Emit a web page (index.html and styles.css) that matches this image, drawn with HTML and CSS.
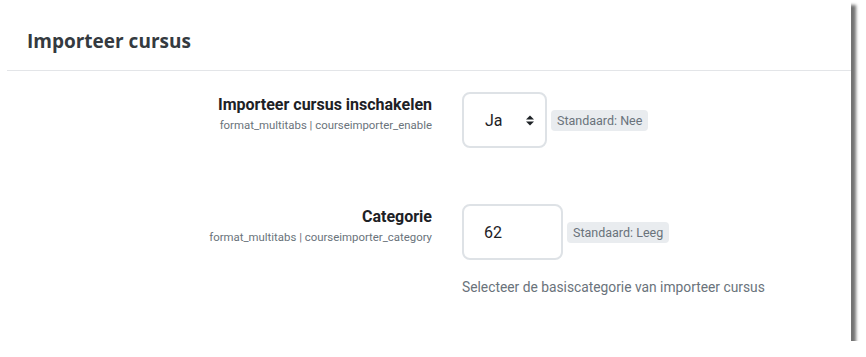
FILE: index.html
```html
<!DOCTYPE html>
<html lang="nl">
<head>
<meta charset="utf-8">
<title>Importeer cursus</title>
<link rel="stylesheet" href="styles.css">
</head>
<body>
<div class="page">
  <div class="header">
    <h2 class="title">Importeer cursus</h2>
  </div>
  <div class="settings">
    <div class="label-col">
      <div class="label">Importeer cursus inschakelen</div>
      <div class="setting-name">format_multitabs | courseimporter_enable</div>
    </div>
    <div class="control-col">
      <div class="control-line">
        <div class="select">
          <span>Ja</span>
          <svg class="caret" width="8" height="11" viewBox="0 0 8 11"><path d="M0 4.5 L4 0.5 L8 4.5 Z M0 6.5 L8 6.5 L4 10.5 Z" fill="#1d2125"/></svg>
        </div>
        <span class="badge">Standaard: Nee</span>
      </div>
    </div>

    <div class="label-col row2">
      <div class="label">Categorie</div>
      <div class="setting-name">format_multitabs | courseimporter_category</div>
    </div>
    <div class="control-col row2">
      <div class="control-line">
        <div class="input">62</div>
        <span class="badge">Standaard: Leeg</span>
      </div>
      <div class="help">Selecteer de basiscategorie van importeer cursus</div>
    </div>
  </div>
</div>
</body>
</html>
```

FILE: styles.css
```css
html, body {
  margin: 0;
  padding: 0;
  background: #ffffff;
}

body {
  font-family: Roboto, "Liberation Sans", sans-serif;
  color: #1d2125;
}

.page {
  width: 851px;
  height: 341px;
  background: #ffffff;
  box-shadow: 5px 5px 3px rgba(0, 0, 0, 0.55);
  position: relative;
}

.header {
  margin-left: 7px;
  border-bottom: 1px solid #e3e5e8;
  height: 71px;
  box-sizing: border-box;
  padding: 28px 0 0 20px;
}

.title {
  margin: 0;
  font-family: "Open Sans", sans-serif;
  font-weight: 700;
  font-size: 19px;
  line-height: 26px;
  color: #343a40;
}

.settings {
  display: grid;
  grid-template-columns: 432px 1fr;
  column-gap: 30px;
  row-gap: 56px;
  padding-top: 21px;
}

.label-col {
  text-align: right;
  padding-top: 1px;
}

.label {
  font-weight: 700;
  font-size: 16px;
  line-height: 24px;
  color: #1d2125;
}

.setting-name {
  font-size: 11.4px;
  line-height: 16px;
  color: #6a737b;
}

.control-line {
  display: flex;
  align-items: center;
  gap: 4px;
}

.select, .input {
  box-sizing: border-box;
  height: 56px;
  border: 2px solid #dee2e6;
  border-radius: 8px;
  font-size: 16px;
  color: #1d2125;
  display: flex;
  align-items: center;
}

.select {
  width: 85px;
  padding: 0 11px 0 21px;
  justify-content: space-between;
}

.caret {
  display: block;
}

.input {
  width: 101px;
  padding-left: 20px;
}

.badge {
  background: #e9ecef;
  color: #6a737b;
  font-size: 12.5px;
  line-height: 21px;
  padding: 0 6px;
  border-radius: 4px;
}

.help {
  margin-top: 17px;
  font-size: 13.8px;
  line-height: 21px;
  color: #6a737b;
}
```
